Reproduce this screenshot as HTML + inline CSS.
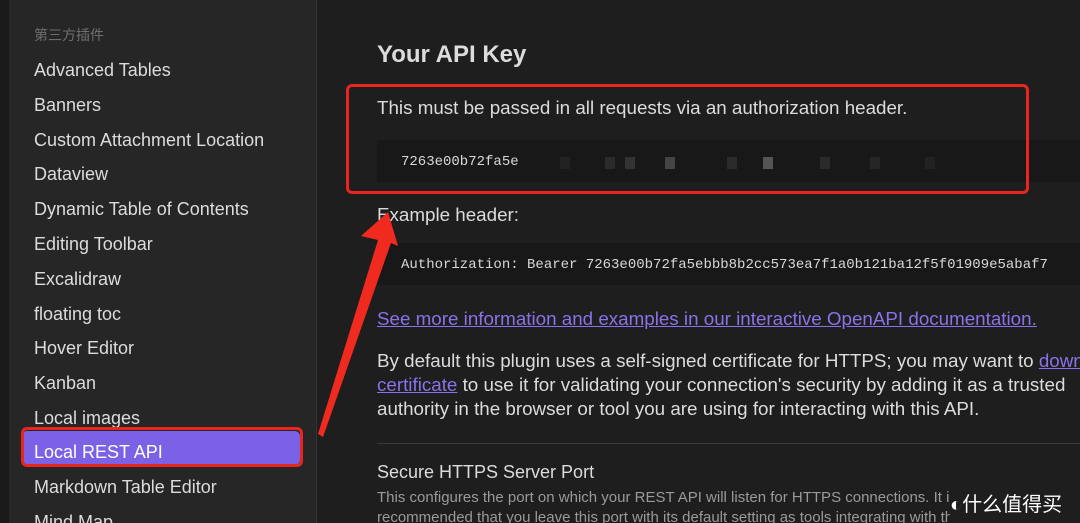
<!DOCTYPE html>
<html><head><meta charset="utf-8"><style>
html,body{margin:0;width:1080px;height:523px;overflow:hidden}
body{background:#1e1e1e;font-family:"Liberation Sans","Noto Sans CJK SC",sans-serif;position:relative;color:#dadada}
.strip{position:absolute;left:0;top:0;width:9px;height:523px;background:#1a1a1a}
.side{position:absolute;left:9px;top:0;width:307px;height:523px;background:#262626;border-right:1px solid #333}
.hd{position:absolute;left:34px;top:25px;font-size:14px;color:#6e6e6e}
.it{position:absolute;left:34px;font-size:18px;color:#dcdcdc;line-height:20px;white-space:nowrap}
.sel{position:absolute;left:22px;top:431px;width:278px;height:34px;background:#7b61e6;border-radius:5px}
.selbox{position:absolute;left:21px;top:427px;width:276px;height:34px;border:3px solid #e8261f;border-radius:6px}
.t{position:absolute;left:377px;font-size:18.8px;color:#dcdcdc;white-space:nowrap}
.code{position:absolute;left:377px;width:703px;height:42px;background:#181818;font-family:"Liberation Mono",monospace;font-size:14px;color:#d8d8d8;line-height:44px;padding-left:24px;box-sizing:border-box;white-space:nowrap;overflow:hidden}
a{color:#8a72ea;text-decoration:underline}
.red{position:absolute;left:346px;top:84px;width:677px;height:104px;border:3px solid #e8261f;border-radius:6px}
.pix{position:absolute;top:157px;width:10px;height:12px}
</style></head><body>
<div class="strip"></div>
<div class="side"></div>
<div class="hd">第三方插件</div>
<div class="it" style="top:60px">Advanced Tables</div>
<div class="it" style="top:95px">Banners</div>
<div class="it" style="top:130px">Custom Attachment Location</div>
<div class="it" style="top:164px">Dataview</div>
<div class="it" style="top:199px">Dynamic Table of Contents</div>
<div class="it" style="top:234px">Editing Toolbar</div>
<div class="it" style="top:269px">Excalidraw</div>
<div class="it" style="top:304px">floating toc</div>
<div class="it" style="top:338px">Hover Editor</div>
<div class="it" style="top:373px">Kanban</div>
<div class="it" style="top:408px">Local images</div>
<div class="sel"></div>
<div class="selbox"></div>
<div class="it" style="top:442px;color:#fff">Local REST API</div>
<div class="it" style="top:477px">Markdown Table Editor</div>
<div class="it" style="top:512px">Mind Map</div>

<div class="t" style="top:41px;font-size:24px;font-weight:bold">Your API Key</div>
<div class="t" style="top:97px">This must be passed in all requests via an authorization header.</div>
<div class="code" style="top:140px">7263e00b72fa5e</div>
<div class="pix" style="left:560px;background:#222"></div>
<div class="pix" style="left:605px;background:#2a2a2a"></div>
<div class="pix" style="left:625px;background:#333"></div>
<div class="pix" style="left:665px;background:#444"></div>
<div class="pix" style="left:727px;background:#2a2a2a"></div>
<div class="pix" style="left:763px;background:#555"></div>
<div class="pix" style="left:820px;background:#2a2a2a"></div>
<div class="pix" style="left:870px;background:#262626"></div>
<div class="pix" style="left:925px;background:#222"></div>
<div class="red"></div>
<div class="t" style="top:204px">Example header:</div>
<div class="code" style="top:243px">Authorization: Bearer 7263e00b72fa5ebbb8b2cc573ea7f1a0b121ba12f5f01909e5abaf7</div>
<div class="t" style="top:308px"><a>See more information and examples in our interactive OpenAPI documentation.</a></div>
<div class="t" style="top:349px;line-height:24px">By default this plugin uses a self-signed certificate for HTTPS; you may want to <a>download this</a><br><a>certificate</a> to use it for validating your connection's security by adding it as a trusted<br>authority in the browser or tool you are using for interacting with this API.</div>
<div style="position:absolute;left:377px;top:443px;width:703px;height:1px;background:#3a3a3a"></div>
<div class="t" style="top:462px;font-size:18px">Secure HTTPS Server Port</div>
<div class="t" style="top:488px;font-size:15px;color:#9a9a9a;line-height:20px">This configures the port on which your REST API will listen for HTTPS connections. It is<br>recommended that you leave this port with its default setting as tools integrating with this</div>
<div style="position:absolute;left:950px;top:488px;width:130px;height:35px;background:#1e1e1e;color:#fff;font-size:20px">◐什么值得买</div>
<svg style="position:absolute;left:0;top:0" width="1080" height="523"><polygon points="388,212 361,236 378,240 318,434 323,437 391,243 398,246" fill="#f02a1e"/></svg>
</body></html>
